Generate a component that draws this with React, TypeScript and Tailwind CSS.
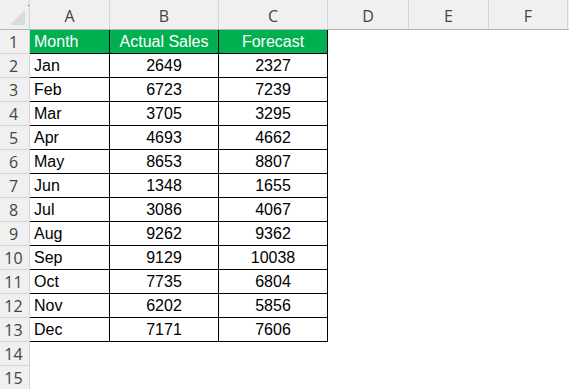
import React from "react";

const rows: [string, number, number][] = [
  ["Jan", 2649, 2327],
  ["Feb", 6723, 7239],
  ["Mar", 3705, 3295],
  ["Apr", 4693, 4662],
  ["May", 8653, 8807],
  ["Jun", 1348, 1655],
  ["Jul", 3086, 4067],
  ["Aug", 9262, 9362],
  ["Sep", 9129, 10038],
  ["Oct", 7735, 6804],
  ["Nov", 6202, 5856],
  ["Dec", 7171, 7606],
];

const hdrFont = { fontFamily: '"Open Sans", "Noto Sans", sans-serif' };
const cellFont = { fontFamily: '"Liberation Sans", Arial, sans-serif' };

function RowHeader({ n }: { n: number }) {
  return (
    <div
      className="w-[30px] h-full shrink-0 bg-[#f0f0f0] border-r border-b border-[#d4d4d4] flex items-center justify-center text-[16px] text-[#444] pr-[2px]"
      style={hdrFont}
    >
      {n}
    </div>
  );
}

export default function App() {
  return (
    <div className="w-[569px] h-[389px] bg-white overflow-hidden relative">
      {/* column header */}
      <div className="flex h-[30px] bg-[#f0f0f0] border-b border-[#b4b4b4]" style={hdrFont}>
        <div className="w-[30px] shrink-0 border-r border-[#d4d4d4] relative">
          <svg className="absolute left-0 top-0" width="30" height="29">
            <polygon points="25,10 25,25 10,25" fill="#dadada" />
            <rect x="28" y="5" width="1" height="1" fill="#2b6cb0" />
          </svg>
        </div>
        {[
          ["A", "w-[80px]"],
          ["B", "w-[109px]"],
          ["C", "w-[109px]"],
          ["D", "w-[81px]"],
          ["E", "w-[80px]"],
          ["F", "w-[79px]"],
        ].map(([l, w]) => (
          <div
            key={l}
            className={`${w} shrink-0 border-r border-[#d4d4d4] flex items-center justify-center text-[16px] text-[#444] pt-[2px]`}
          >
            {l}
          </div>
        ))}
      </div>
      {/* header row */}
      <div className="flex h-[24px]">
        <RowHeader n={1} />
        <div className="flex text-white text-[16px]" style={cellFont}>
          <div className="w-[80px] bg-[#00b050] border-r border-b border-black flex items-center pl-[4px] pt-[1px]">Month</div>
          <div className="w-[109px] bg-[#00b050] border-r border-b border-black flex items-center justify-center pt-[1px]">Actual Sales</div>
          <div className="w-[109px] bg-[#00b050] border-r border-b border-black flex items-center justify-center pt-[1px]">Forecast</div>
        </div>
      </div>
      {rows.map(([m, a, f], i) => (
        <div key={m} className="flex h-[24px]">
          <RowHeader n={i + 2} />
          <div className="flex text-black text-[16px]" style={cellFont}>
            <div className="w-[80px] border-r border-b border-black flex items-center pl-[4px] pt-[1px]">{m}</div>
            <div className="w-[109px] border-r border-b border-black flex items-center justify-center pt-[1px]">{a}</div>
            <div className="w-[109px] border-r border-b border-black flex items-center justify-center pt-[1px]">{f}</div>
          </div>
        </div>
      ))}
      {[14, 15].map((n) => (
        <div key={n} className="flex h-[24px]">
          <RowHeader n={n} />
        </div>
      ))}
    </div>
  );
}
